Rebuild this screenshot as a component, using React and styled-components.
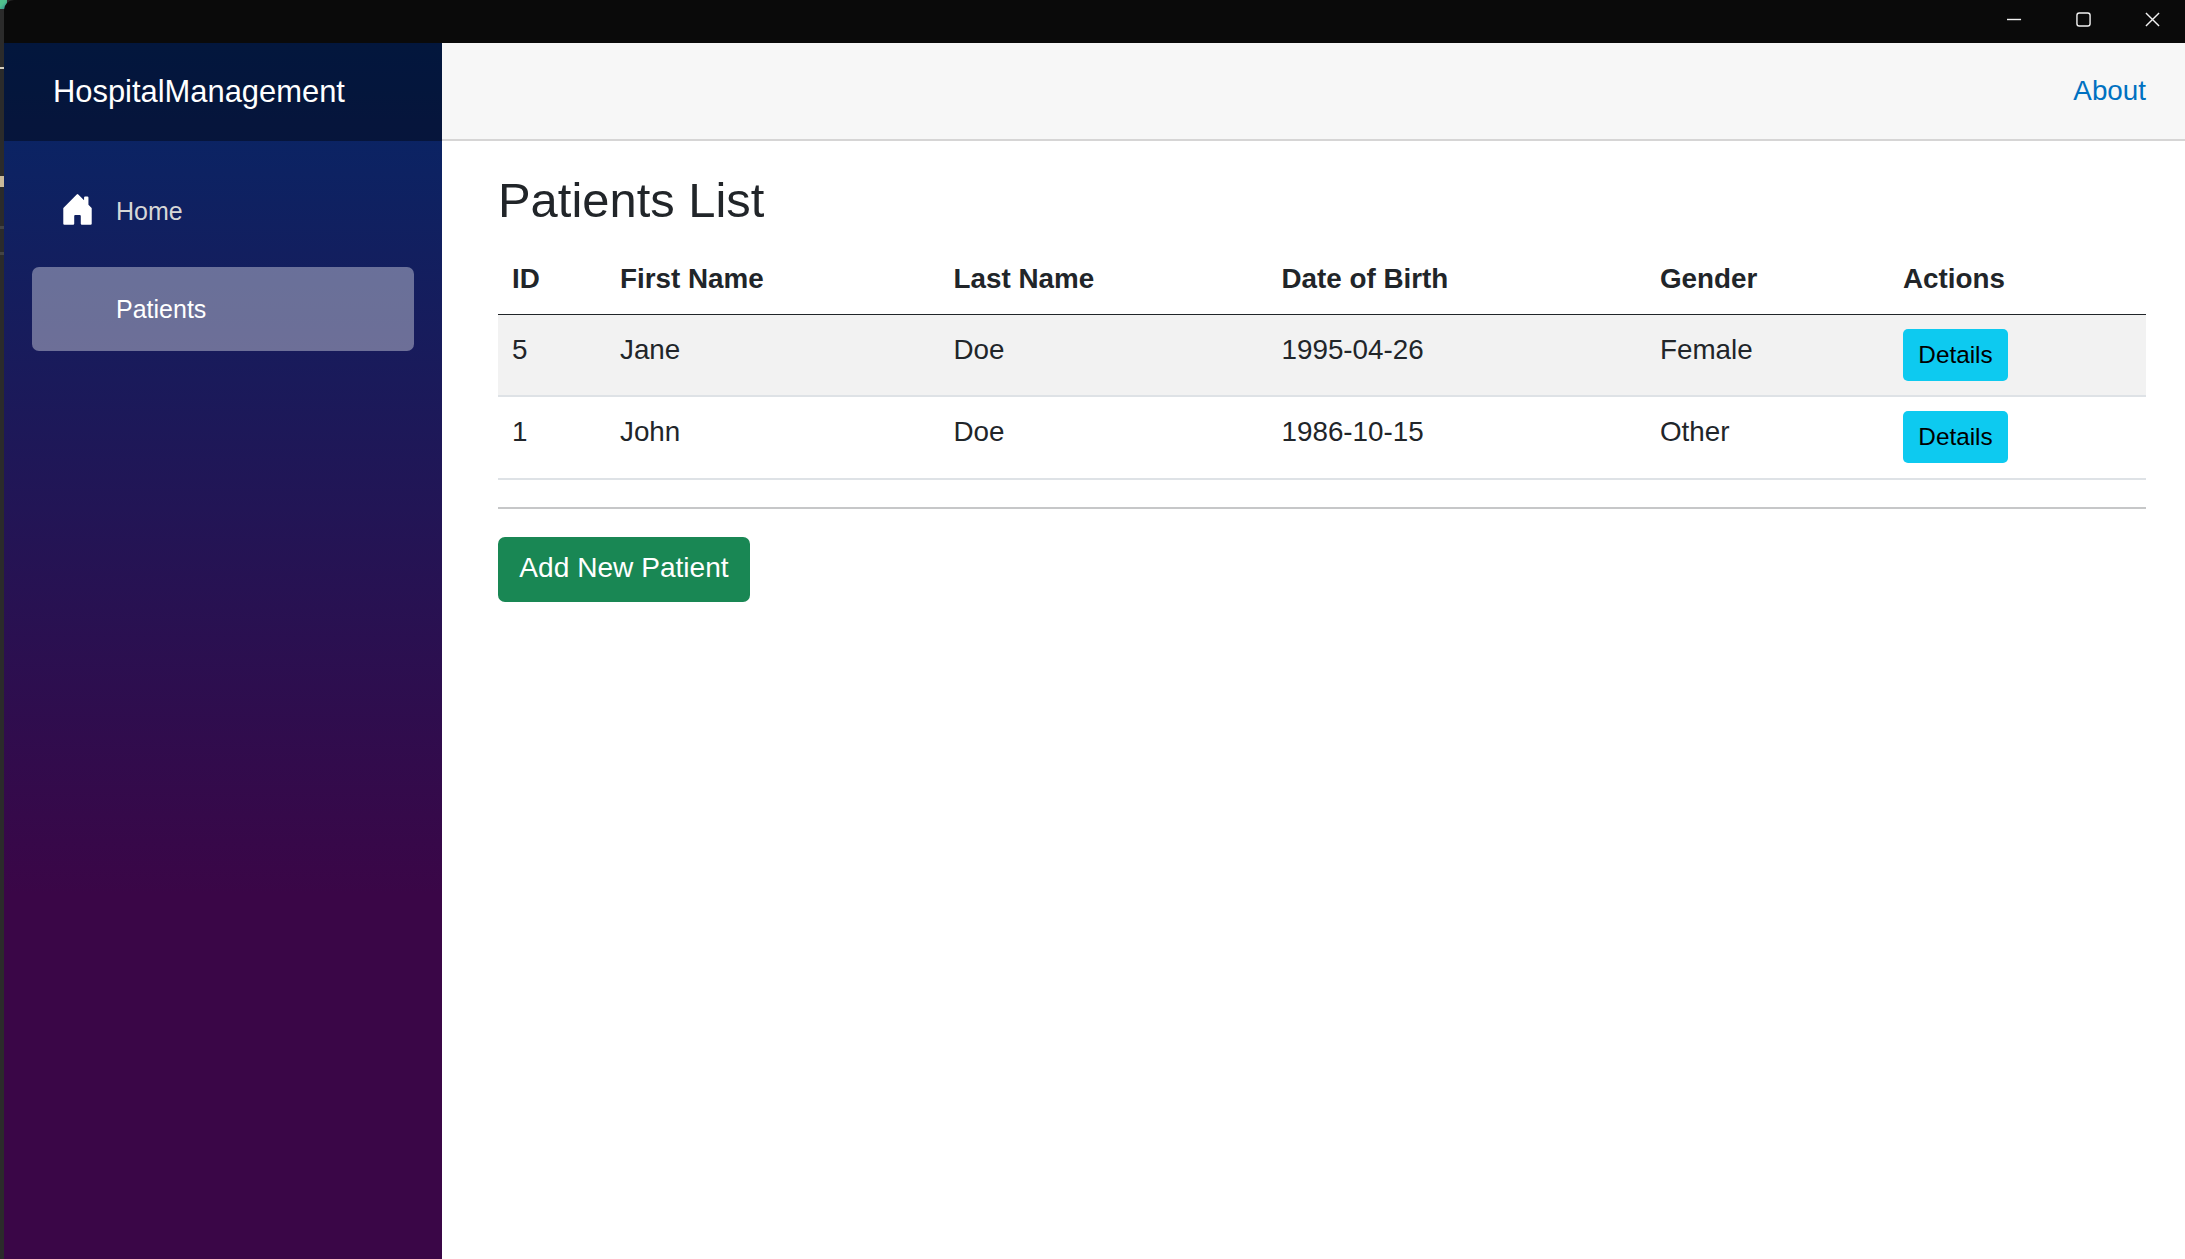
import React from 'react';
import styled, { createGlobalStyle } from 'styled-components';

const patients = [
  { id: 5, firstName: 'Jane', lastName: 'Doe', birth: '1995-04-26', gender: 'Female' },
  { id: 1, firstName: 'John', lastName: 'Doe', birth: '1986-10-15', gender: 'Other' }
];

const columns = [
  { label: 'ID', width: 108 },
  { label: 'First Name', width: 333.5 },
  { label: 'Last Name', width: 328 },
  { label: 'Date of Birth', width: 378.5 },
  { label: 'Gender', width: 243 },
  { label: 'Actions', width: 257 }
];

const HouseIcon = () => (
  <IconSvg viewBox="0 0 16 16" fill="currentColor">
    <path d="M6.5 14.5v-3.505c0-.245.25-.495.5-.495h2c.25 0 .5.25.5.5v3.5a.5.5 0 0 0 .5.5h4a.5.5 0 0 0 .5-.5v-7a.5.5 0 0 0-.146-.354L13 5.793V2.5a.5.5 0 0 0-.5-.5h-1a.5.5 0 0 0-.5.5v1.293L8.354 1.146a.5.5 0 0 0-.708 0l-6 6A.5.5 0 0 0 1.5 7.5v7a.5.5 0 0 0 .5.5h4a.5.5 0 0 0 .5-.5Z" />
  </IconSvg>
);

const WindowControls = () => (
  <Controls>
    <ControlSvg viewBox="0 0 16 16">
      <path d="M0 8h15" />
    </ControlSvg>
    <ControlSvg viewBox="0 0 16 16">
      <rect x="1" y="1" width="14" height="14" rx="2.5" />
    </ControlSvg>
    <ControlSvg viewBox="0 0 16 16">
      <path d="M1 1l14 14M15 1L1 15" />
    </ControlSvg>
  </Controls>
);

function App() {
  return (
    <>
      <GlobalStyle />
      <Desktop>
        <DesktopEdge />
        <Window>
          <TitleBar>
            <WindowControls />
          </TitleBar>
          <Page>
            <Sidebar>
              <Brand>HospitalManagement</Brand>
              <Nav>
                <NavItem>
                  <HouseIcon />
                  Home
                </NavItem>
                <NavItem active>Patients</NavItem>
              </Nav>
            </Sidebar>
            <Main>
              <TopRow>
                <AboutLink href="#">About</AboutLink>
              </TopRow>
              <Content>
                <Heading>Patients List</Heading>
                <Table>
                  <colgroup>
                    {columns.map(col => (
                      <col key={col.label} width={col.width} />
                    ))}
                  </colgroup>
                  <thead>
                    <tr>
                      {columns.map(col => (
                        <HeadCell key={col.label}>{col.label}</HeadCell>
                      ))}
                    </tr>
                  </thead>
                  <tbody>
                    {patients.map((p, i) => (
                      <Row key={p.id} striped={i === 0}>
                        <Cell>{p.id}</Cell>
                        <Cell>{p.firstName}</Cell>
                        <Cell>{p.lastName}</Cell>
                        <Cell>{p.birth}</Cell>
                        <Cell>{p.gender}</Cell>
                        <Cell>
                          <DetailsButton>Details</DetailsButton>
                        </Cell>
                      </Row>
                    ))}
                  </tbody>
                </Table>
                <Divider />
                <AddButton>Add New Patient</AddButton>
              </Content>
            </Main>
          </Page>
        </Window>
      </Desktop>
    </>
  );
}

const GlobalStyle = createGlobalStyle`
  html, body {
    margin: 0;
    height: 100%;
  }
  body {
    font-family: "Liberation Sans", Arial, sans-serif;
    font-size: 27.8px;
    line-height: 1.5;
    color: #212529;
    overflow: hidden;
  }
  #root {
    height: 100%;
  }
`;

const Desktop = styled.div`
  position: relative;
  display: flex;
  height: 1259px;
  background: #2b2b2b;

  /* bit of the desktop wallpaper showing behind the rounded window corner */
  &:before {
    content: '';
    position: absolute;
    top: 0;
    left: 0;
    width: 7px;
    height: 9px;
    background: linear-gradient(135deg, #4fc08d 40%, #2e7f8f 100%);
  }
`;

const DesktopEdge = styled.div`
  width: 4px;
  flex: none;
  background: linear-gradient(
    180deg,
    #2b2b2b 0,
    #2b2b2b 67px,
    #d8d0c0 67px,
    #d8d0c0 69px,
    #2b2b2b 69px,
    #2b2b2b 176px,
    #c9b99a 176px,
    #c9b99a 187px,
    #2b2b2b 187px,
    #2b2b2b 226px,
    #444 226px,
    #444 229px,
    #2b2b2b 229px,
    #2b2b2b 252px,
    #444 252px,
    #444 255px,
    #2b2b2b 255px
  );
`;

const Window = styled.div`
  position: relative;
  flex: 1;
  display: flex;
  flex-direction: column;
  min-width: 0;
  border-top-left-radius: 10px;
  overflow: hidden;
`;

const TitleBar = styled.div`
  flex: none;
  height: 43px;
  display: flex;
  justify-content: flex-end;
  background: #0a0a0a;
`;

const Controls = styled.div`
  display: flex;
  align-items: center;
  gap: 54px;
  padding: 0 25px 4px 0;
`;

const ControlSvg = styled.svg`
  width: 15px;
  height: 15px;
  fill: none;
  stroke: #f2f2f2;
  stroke-width: 1.5;
`;

const Page = styled.div`
  flex: 1;
  display: flex;
  min-height: 0;
`;

const Sidebar = styled.div`
  flex: none;
  width: 438px;
  display: flex;
  flex-direction: column;
  background: linear-gradient(180deg, rgb(5, 39, 103) 0%, #3a0647 70%);
`;

const Brand = styled.div`
  flex: none;
  height: 98px;
  display: flex;
  align-items: center;
  padding-left: 49px;
  background: rgba(0, 0, 0, 0.4);
  color: #fff;
  font-size: 30.9px;
`;

const Nav = styled.nav`
  display: flex;
  flex-direction: column;
  gap: 14px;
  padding: 28px 28px 0;
`;

const NavItem = styled.div`
  position: relative;
  height: 84px;
  display: flex;
  align-items: center;
  padding: 1px 0 0 84px;
  box-sizing: border-box;
  border-radius: 7px;
  font-size: 25px;
  color: ${props => (props.active ? '#fff' : '#d7d7d7')};
  background: ${props => (props.active ? 'rgba(255, 255, 255, 0.37)' : 'transparent')};
`;

const IconSvg = styled.svg`
  position: absolute;
  left: 28px;
  top: 23px;
  width: 35px;
  height: 35px;
  color: #fff;
`;

const Main = styled.div`
  flex: 1;
  min-width: 0;
  display: flex;
  flex-direction: column;
  background: #fff;
`;

const TopRow = styled.div`
  flex: none;
  height: 98px;
  box-sizing: border-box;
  display: flex;
  align-items: center;
  justify-content: flex-end;
  padding-right: 39px;
  background: #f7f7f7;
  border-bottom: 2px solid #d6d5d5;
`;

const AboutLink = styled.a`
  color: #0071c1;
  text-decoration: none;
`;

const Content = styled.div`
  padding: 30px 39px 0 56px;
`;

const Heading = styled.h1`
  margin: 0 0 14px;
  font-size: 48.9px;
  font-weight: 400;
  line-height: 1.2;
`;

const Table = styled.table`
  width: 1648px;
  table-layout: fixed;
  border-collapse: collapse;
`;

const HeadCell = styled.th`
  padding: 14px 14px 15px;
  text-align: left;
  font-weight: 700;
  border-bottom: 1px solid #212529;
`;

const Row = styled.tr`
  background: ${props => (props.striped ? '#f2f2f2' : 'transparent')};

  &:last-child td {
    padding-bottom: 15px;
  }
`;

const Cell = styled.td`
  padding: 14px 14px 13.5px;
  vertical-align: top;
  border-bottom: 2px solid #dee2e6;
`;

const DetailsButton = styled.button`
  display: block;
  box-sizing: border-box;
  width: 105px;
  height: 52px;
  padding: 0;
  border: 0;
  border-radius: 5px;
  background: #0dcaf0;
  color: #000;
  font-family: inherit;
  font-size: 24.3px;
`;

const Divider = styled.hr`
  margin: 27px 0 28px;
  border: 0;
  border-top: 2px solid #c6c7c8;
`;

const AddButton = styled.button`
  width: 252px;
  height: 65px;
  padding: 0 0 2px;
  border: 0;
  border-radius: 7px;
  background: #198754;
  color: #fff;
  font-family: inherit;
  font-size: 28.1px;
`;

export default App;
